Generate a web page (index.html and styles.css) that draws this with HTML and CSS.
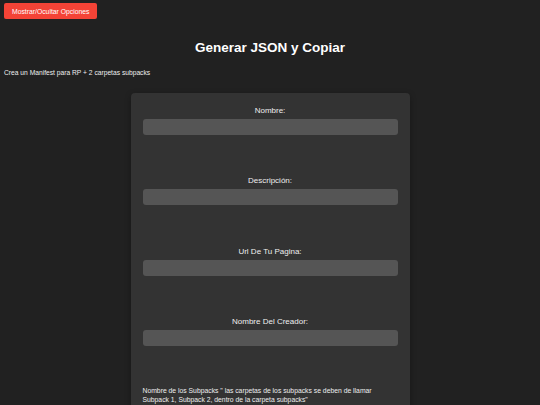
FILE: index.html
```html
<!DOCTYPE html>
<html lang="es">
<head>
  <meta charset="UTF-8" />
  <title>Generar JSON y Copiar</title>
  <link rel="stylesheet" href="styles.css">
</head>
<body>

  <button class="toggle-btn">Mostrar/Ocultar Opciones</button>

  <h1>Generar JSON y Copiar</h1>
  <p class="intro">Crea un Manifest para RP + 2 carpetas subpacks</p>

  <div class="form-card">
    <div class="field">
      <label for="nombre">Nombre:</label>
      <input type="text" id="nombre" />
    </div>

    <div class="field">
      <label for="descripcion">Descripción:</label>
      <input type="text" id="descripcion" />
    </div>

    <div class="field">
      <label for="url">Url De Tu Pagina:</label>
      <input type="text" id="url" />
    </div>

    <div class="field">
      <label for="creador">Nombre Del Creador:</label>
      <input type="text" id="creador" />
    </div>

    <p class="note">Nombre de los Subpacks " las carpetas de los subpacks se deben de llamar Subpack 1, Subpack 2, dentro de la carpeta subpacks"</p>
  </div>

</body>
</html>
```

FILE: styles.css
```css
body {
  font-family: 'Liberation Sans', Arial, sans-serif;
  background-color: #212121;
  color: #eee;
  margin: 0;
  padding: 3px 4px;
}

.toggle-btn {
  display: block;
  font-family: inherit;
  font-size: 6.8px;
  height: 16px;
  padding: 0 8px;
  background-color: #f44336;
  color: white;
  border: none;
  border-radius: 2px;
  cursor: pointer;
}

h1 {
  font-size: 13.5px;
  text-align: center;
  margin: 21px 0 0;
  line-height: 16px;
  color: #fff;
}

.intro {
  font-size: 6.7px;
  margin: 12px 0 0;
  line-height: 9px;
}

.form-card {
  background: #333;
  width: 255px;
  margin: 16px auto 0;
  padding: 13px 12px 12px;
  border-radius: 4px;
  box-shadow: 0 2px 6px rgba(0, 0, 0, 0.3);
}

.field {
  display: flex;
  flex-direction: column;
  align-items: center;
  margin-bottom: 41.3px;
}

.field label {
  font-size: 8px;
  line-height: 10px;
  margin-bottom: 3px;
}

.field input {
  width: 100%;
  height: 16px;
  box-sizing: border-box;
  background: #555;
  border: none;
  border-radius: 3px;
  color: #fff;
  padding: 0 5px;
}

.note {
  font-size: 6.8px;
  line-height: 9px;
  margin: -1px 0 0;
}
```
